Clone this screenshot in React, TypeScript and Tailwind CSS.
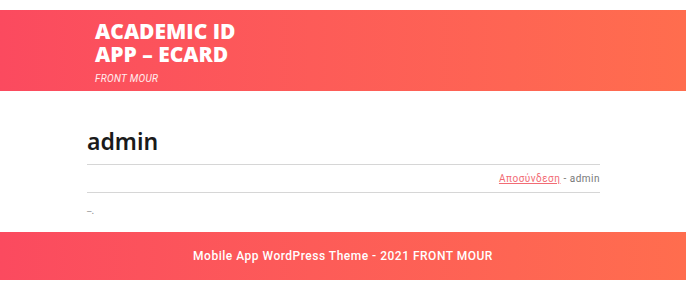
export default function App() {
  return (
    <div className="min-h-[300px] bg-white pt-[10px]" style={{ fontFamily: "Inter, 'Noto Sans', sans-serif" }}>
      {/* Header */}
      <header className="h-[81px] bg-gradient-to-r from-[#fb4a5f] to-[#ff6d4e] pl-[95px] pt-[10px]">
        <h1 className="flex flex-col font-['Open_Sans',sans-serif] text-[21px] font-extrabold uppercase leading-[23px] text-white">
          <span>Academic ID</span>
          <span>App – Ecard</span>
        </h1>
        <p className="mt-[5px] font-['Roboto',sans-serif] text-[10px] italic uppercase tracking-[0.3px] text-white/90">
          Front Mour
        </p>
      </header>

      {/* Main */}
      <main className="px-[87px] pt-[37px] pb-[15px]">
        <h2 className="font-['Noto_Sans',sans-serif] text-[23px] font-semibold leading-[26px] text-[#1a1a1a]">admin</h2>
        <div className="mt-[10px] w-[513px] border-t border-[#d6d6d6]" />
        <div className="flex h-[27px] w-[513px] items-center justify-end font-['Roboto',sans-serif] text-[10px] tracking-[0.5px] text-[#777]">
          <a href="#" className="text-[#f26b74] underline">Αποσύνδεση</a>
          <span className="ml-[3px]">- admin</span>
        </div>
        <div className="w-[513px] border-t border-[#d6d6d6]" />
        <p className="mt-[12px] text-[9px] leading-[12px] text-[#999]">–.</p>
      </main>

      {/* Footer */}
      <footer className="flex h-[48px] items-center justify-center bg-gradient-to-r from-[#fb4a5f] to-[#ff6d4e] font-['Roboto',sans-serif] text-[12px] font-medium tracking-[0.5px] text-white">
        Mobile App WordPress Theme - 2021 FRONT MOUR
      </footer>
    </div>
  );
}
